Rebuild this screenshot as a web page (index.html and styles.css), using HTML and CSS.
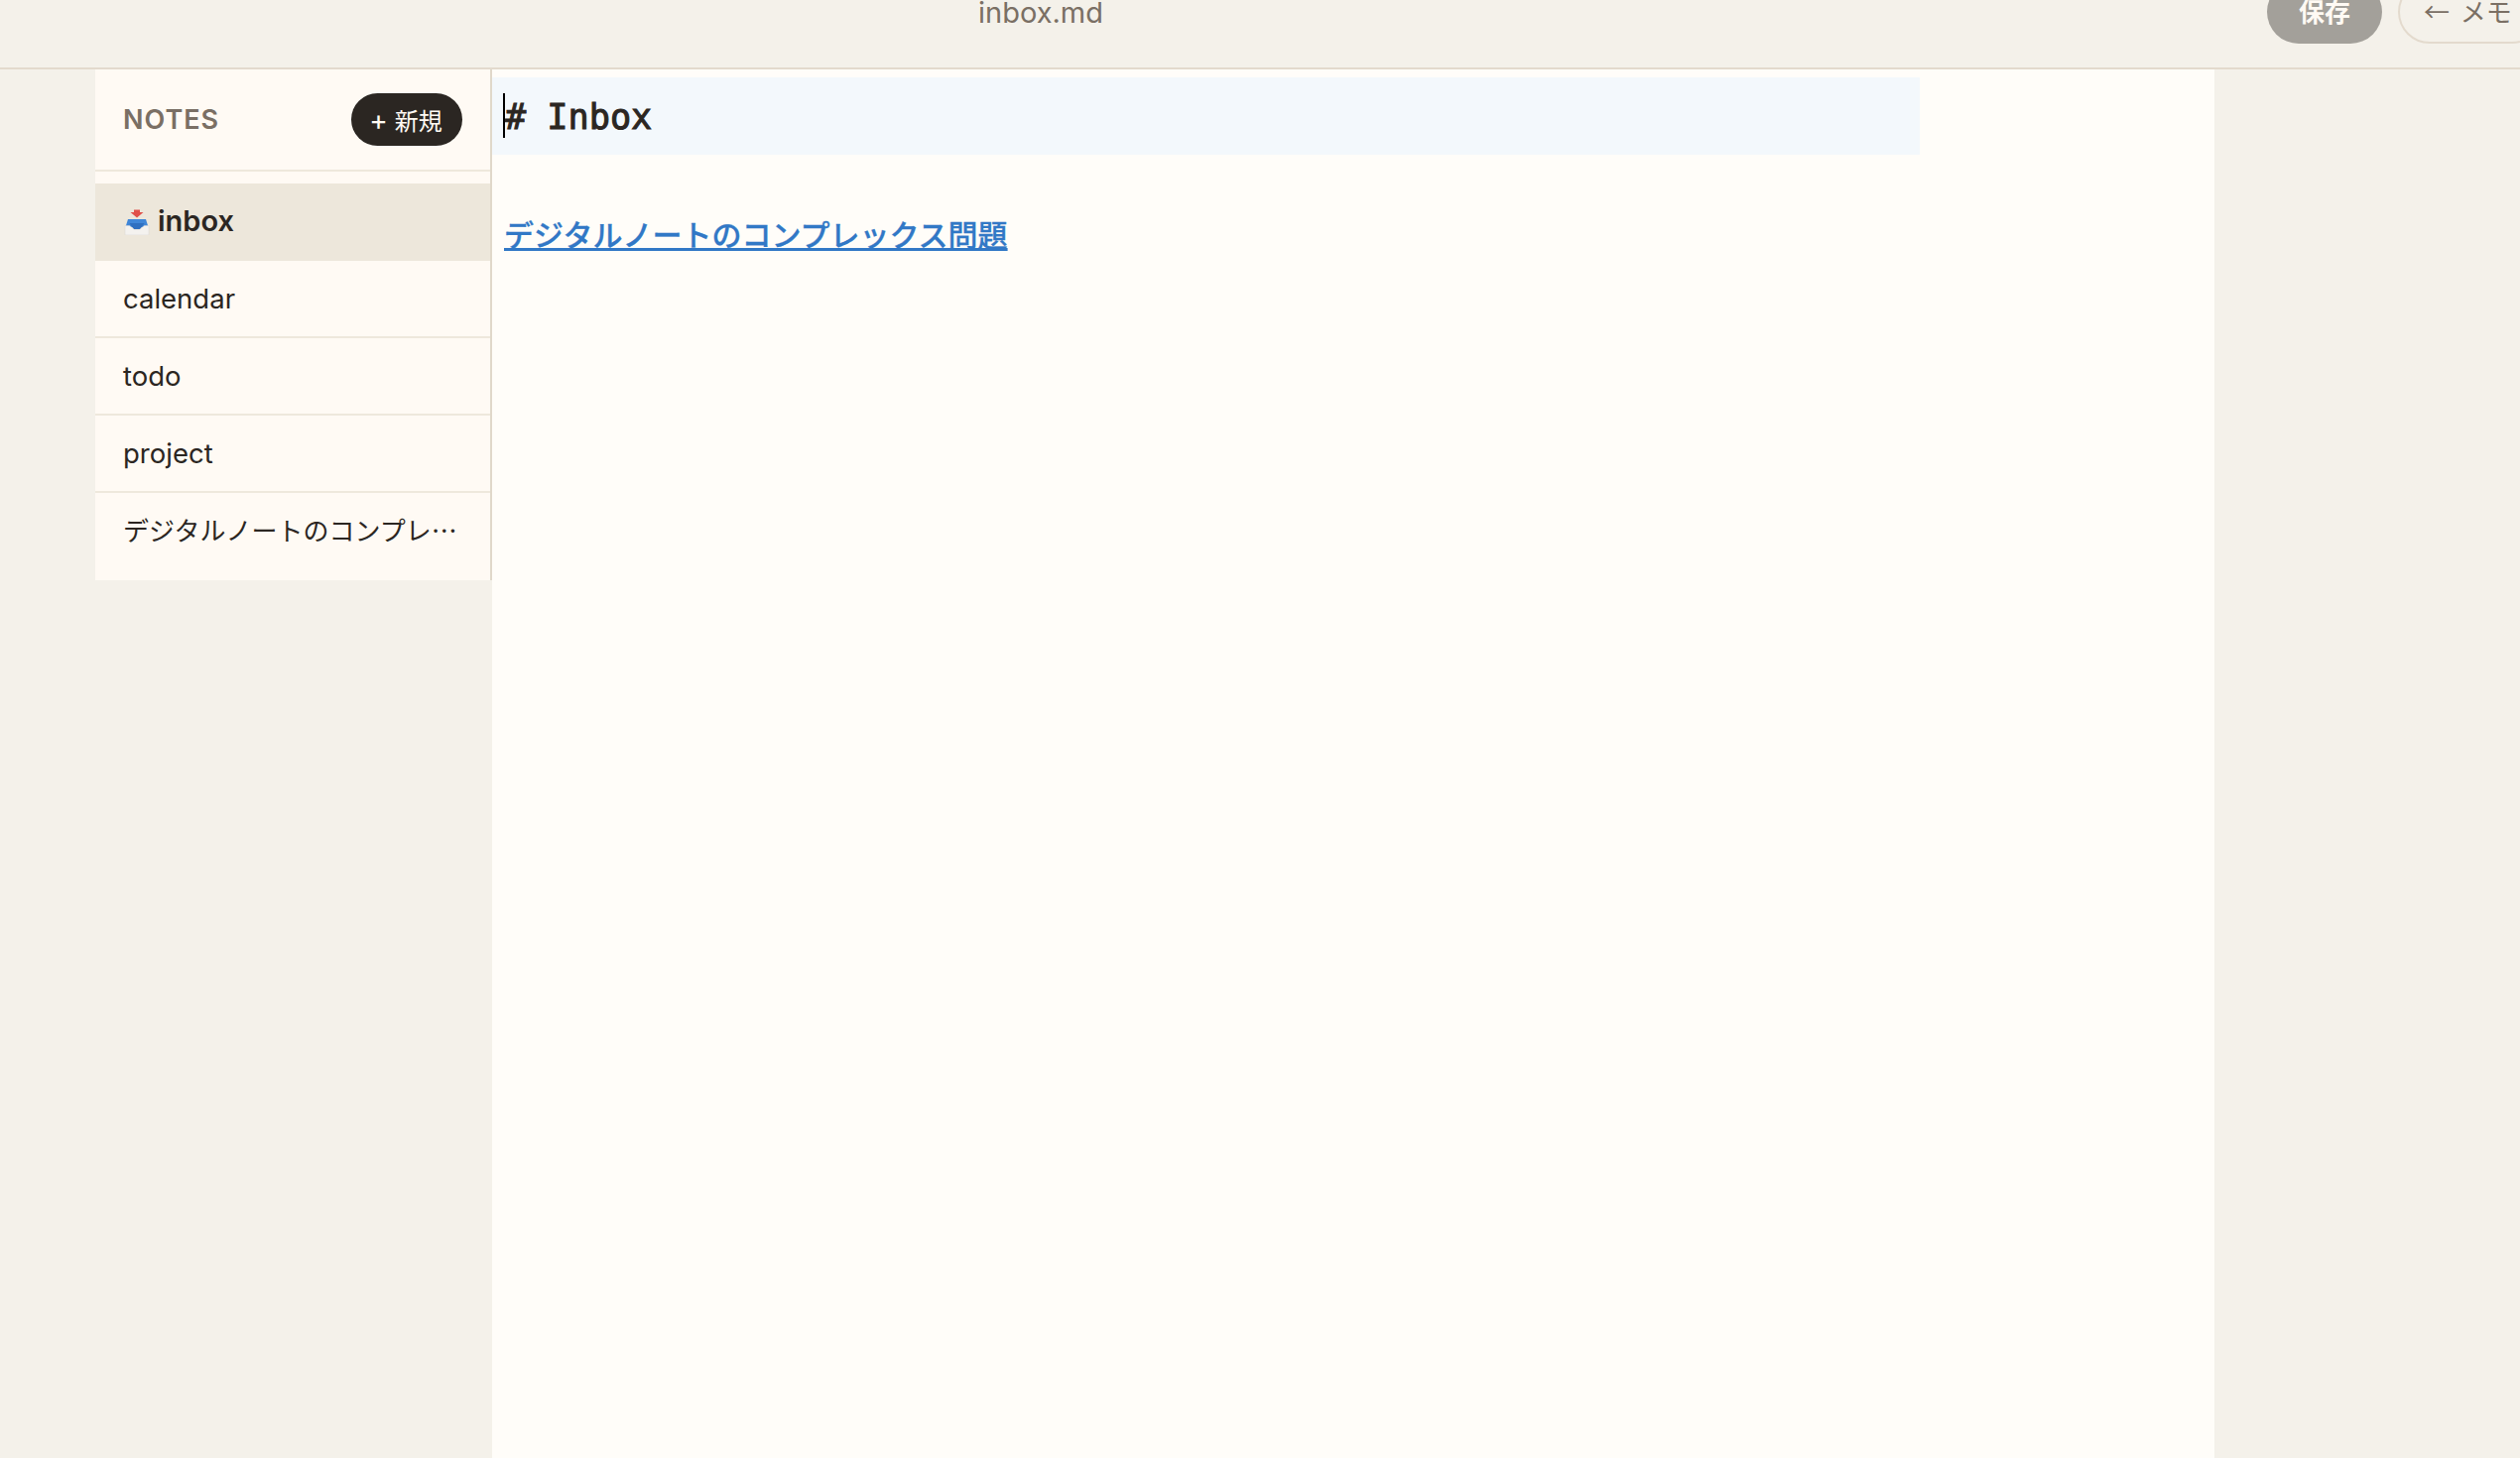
FILE: index.html
```html
<!DOCTYPE html>
<html lang="ja">
<head>
<meta charset="utf-8">
<title>inbox.md</title>
<link rel="stylesheet" href="styles.css">
</head>
<body>
<div class="page">
  <header class="topbar">
    <span class="filename">inbox.md</span>
    <div class="actions">
      <button class="btn-save">保存</button>
      <button class="btn-back">← メモ</button>
    </div>
  </header>
  <div class="workspace">
    <aside class="sidebar">
      <div class="side-head">
        <span class="side-title">NOTES</span>
        <button class="btn-new"><span class="plus">+</span> 新規</button>
      </div>
      <ul class="note-list">
        <li class="note active">
          <svg class="inbox-icon" viewBox="0 0 26 26" aria-hidden="true">
            <path d="M10 .5h6V3h3.500L13 8.500 6.500 3H10z" fill="#e0514a"/>
            <path d="M4 10h18l2.500 8h-23z" fill="#3f86d8"/>
            <path d="M5.500 14h15l-4 6h-7z" fill="#2f6fc0"/>
            <path d="M1 16.500h4.500l5 4h5l5-4H25V26H1z" fill="#f4f2ef" stroke="#d8d5d0" stroke-width=".5"/>
          </svg>
          <span class="active-label">inbox</span>
        </li>
        <li class="note">calendar</li>
        <li class="note">todo</li>
        <li class="note">project</li>
        <li class="note note-jp"><span class="note-text">デジタルノートのコンプレックス問題</span></li>
      </ul>
    </aside>
    <main class="editor">
      <div class="line-current">
        <span class="caret"></span>
        <span class="heading-src"># Inbox</span>
      </div>
      <p class="link-line"><a href="#">デジタルノートのコンプレックス問題</a></p>
    </main>
  </div>
</div>
</body>
</html>
```
FILE: styles.css
```css
* { box-sizing: border-box; }
html, body { margin: 0; height: 100%; overflow: hidden; }
body {
  background: #f4f1ea;
  color: #2b2622;
  font-family: "Inter", "Noto Sans CJK JP", sans-serif;
}
.page {
  margin-top: -44px;
  height: 1514px;
  display: flex;
  flex-direction: column;
}
.topbar {
  flex: none;
  height: 114px;
  display: flex;
  align-items: center;
  padding-left: 986px;
  border-bottom: 2px solid #e3dacd;
}
.filename {
  font-size: 29px;
  color: #7a6f64;
}
.actions {
  margin-left: auto;
  margin-right: -24px;
  display: flex;
  gap: 16px;
  flex: none;
}
.btn-save, .btn-back {
  height: 64px;
  border-radius: 32px;
  padding: 0 0 3px;
}
.btn-save {
  width: 116px;
  border: 0;
  background: #a3a09a;
  color: #fffaf4;
  font-family: "Noto Sans CJK JP", sans-serif;
  font-size: 26px;
  font-weight: 700;
}
.btn-back {
  width: 147px;
  border: 2px solid #e3dacd;
  background: transparent;
  color: #7a6f64;
  font-family: "Noto Sans CJK JP", sans-serif;
  font-size: 26px;
  word-spacing: 5px;
  text-align: left;
  padding-left: 24px;
}
.workspace {
  flex: 1;
  display: flex;
  padding-left: 96px;
  align-items: stretch;
}
.sidebar {
  flex: none;
  width: 400px;
  height: 515px;
  background: #fffaf4;
  border-right: 2px solid #e0d8ca;
}
.side-head {
  height: 103px;
  padding: 0 28px;
  display: flex;
  align-items: center;
  justify-content: space-between;
  border-bottom: 2px solid #eee8dc;
}
.side-title {
  font-size: 27px;
  font-weight: 600;
  letter-spacing: 1px;
  color: #7a6f64;
}
.btn-new {
  width: 112px;
  height: 53px;
  border-radius: 27px;
  padding: 0 2px 1px 0;
  border: 0;
  background: #2b2622;
  color: #fffaf4;
  font-family: "Inter", "Noto Sans CJK JP", sans-serif;
  font-size: 24px;
}
.plus { font-size: 28px; line-height: 1; }
.note-list {
  list-style: none;
  margin: 0;
  padding: 12px 0 16px;
}
.note {
  height: 78px;
  padding: 0 28px;
  display: flex;
  align-items: center;
  font-size: 27.500px;
  border-bottom: 2px solid #eee8dc;
}
.note-jp {
  height: 72px;
  border-bottom: 0;
  font-family: "Noto Sans CJK JP", sans-serif;
  font-size: 26px;
}
.note.active {
  background: #ede7db;
  border-bottom: 0;
  font-weight: 600;
  font-size: 29px;
  gap: 8px;
  padding-left: 29px;
}
.active-label { line-height: 1; padding-bottom: 3px; }
.inbox-icon { width: 26px; height: 26px; flex: none; }
.note-text {
  overflow: hidden;
  white-space: nowrap;
  text-overflow: ellipsis;
}
.editor {
  flex: none;
  width: 1736px;
  background: #fffdf9;
  padding-top: 8px;
}
.line-current {
  width: 1439px;
  height: 78px;
  padding-left: 13px;
  background: #f3f8fc;
  display: flex;
  align-items: center;
  position: relative;
}
.caret {
  position: absolute;
  left: 11px;
  top: 16px;
  width: 2px;
  height: 45px;
  background: #000;
}
.heading-src {
  font-family: "DejaVu Sans Mono", monospace;
  font-size: 35.200px;
  font-weight: 400;
  -webkit-text-stroke: 1px #2b2622;
  white-space: pre;
}
.link-line {
  margin: 55px 0 0 12px;
  font-family: "Noto Sans CJK JP", sans-serif;
  font-size: 30px;
  line-height: 48px;
  font-weight: 500;
}
.link-line a { color: #3178c6; -webkit-text-stroke: 0.3px #3178c6; }
```
